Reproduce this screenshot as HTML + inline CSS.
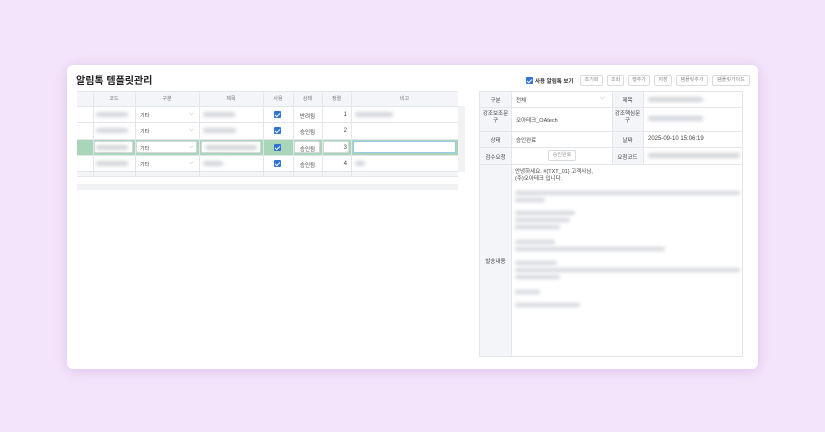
<!DOCTYPE html>
<html><head><meta charset="utf-8"><style>
*{box-sizing:border-box;margin:0;padding:0}
body{width:825px;height:432px;background:#f4e4fb;font-family:"Liberation Sans","Noto Sans CJK KR",sans-serif;position:relative;overflow:hidden;color:#333}
.card{position:absolute;left:67px;top:65px;width:691px;height:304px;background:#fff;border-radius:6px;box-shadow:0 2px 12px rgba(170,120,200,.3)}
.a{position:absolute}
.t{font-size:6px;color:#444;white-space:nowrap}
.bl{position:absolute;height:5px;background:#d3d6dc;filter:blur(1.8px);border-radius:2px}
.hd{background:#f3f5f9}
.ln{position:absolute;background:#e3e6eb}
.cb{position:absolute;width:7px;height:7px;background:#2f73d6;border-radius:1px}
.cb:after{content:"";position:absolute;left:2px;top:0.5px;width:2px;height:4px;border:solid #fff;border-width:0 1px 1px 0;transform:rotate(45deg)}
.btn{position:absolute;top:75px;height:11px;border:1px solid #d8dbe0;border-radius:2px;font-size:5px;color:#888;text-align:center;line-height:9px;background:#fff}
.inp{position:absolute;background:#fff;border:1px solid #d5d9de;border-radius:2px}
</style></head><body>
<div class="card"></div>
<div class="a" style="left:76px;top:72px;font-size:10px;font-weight:bold;color:#222">알림톡 템플릿관리</div>

<div class="a hd" style="left:77px;top:91px;width:381px;height:15px"></div>
<div class="a" style="left:77px;top:139px;width:381px;height:16px;background:#a9d5b9"></div>
<div class="a" style="left:77px;top:171px;width:381px;height:5px;background:#f4f5f7"></div>
<div class="a" style="left:77px;top:184px;width:381px;height:6px;background:#f1f2f4"></div>
<div class="a" style="left:458px;top:106px;width:7px;height:66px;background:#f1f2f4"></div>
<div class="ln" style="left:77px;top:91px;width:381px;height:1px"></div>
<div class="ln" style="left:77px;top:106px;width:381px;height:1px"></div>
<div class="ln" style="left:77px;top:122px;width:381px;height:1px"></div>
<div class="ln" style="left:77px;top:139px;width:381px;height:1px"></div>
<div class="ln" style="left:77px;top:155px;width:381px;height:1px"></div>
<div class="ln" style="left:77px;top:171px;width:381px;height:1px"></div>
<div class="ln" style="left:77px;top:176px;width:381px;height:1px"></div>
<div class="ln" style="left:93px;top:91px;width:1px;height:85px"></div>
<div class="ln" style="left:135px;top:91px;width:1px;height:85px"></div>
<div class="ln" style="left:199px;top:91px;width:1px;height:85px"></div>
<div class="ln" style="left:263px;top:91px;width:1px;height:85px"></div>
<div class="ln" style="left:293px;top:91px;width:1px;height:85px"></div>
<div class="ln" style="left:322px;top:91px;width:1px;height:85px"></div>
<div class="ln" style="left:351px;top:91px;width:1px;height:85px"></div>
<div class="a t" style="left:93px;width:42px;top:95px;text-align:center;font-size:5px;color:#777">코드</div>
<div class="a t" style="left:135px;width:64px;top:95px;text-align:center;font-size:5px;color:#777">구분</div>
<div class="a t" style="left:199px;width:64px;top:95px;text-align:center;font-size:5px;color:#777">제목</div>
<div class="a t" style="left:263px;width:30px;top:95px;text-align:center;font-size:5px;color:#777">사용</div>
<div class="a t" style="left:293px;width:29px;top:95px;text-align:center;font-size:5px;color:#777">상태</div>
<div class="a t" style="left:322px;width:29px;top:95px;text-align:center;font-size:5px;color:#777">정렬</div>
<div class="a t" style="left:351px;width:107px;top:95px;text-align:center;font-size:5px;color:#777">비고</div>

<div class="inp" style="left:94px;top:141px;width:39px;height:12px"></div>
<div class="inp" style="left:136px;top:141px;width:61px;height:12px"></div>
<div class="inp" style="left:201px;top:141px;width:60px;height:12px"></div>
<div class="inp" style="left:294px;top:141px;width:26px;height:12px"></div>
<div class="inp" style="left:323px;top:141px;width:26px;height:12px"></div>
<div class="inp" style="left:353px;top:141px;width:103px;height:12px;border-color:#9fc8e6"></div>

<div class="bl" style="left:96px;top:112px;width:32px"></div>
<div class="bl" style="left:96px;top:128px;width:32px"></div>
<div class="bl" style="left:96px;top:145px;width:32px"></div>
<div class="bl" style="left:96px;top:161px;width:32px"></div>
<div class="bl" style="left:203px;top:112px;width:32px"></div>
<div class="bl" style="left:203px;top:128px;width:33px"></div>
<div class="bl" style="left:205px;top:145px;width:52px"></div>
<div class="bl" style="left:203px;top:161px;width:20px"></div>
<div class="bl" style="left:355px;top:112px;width:38px"></div>
<div class="bl" style="left:355px;top:161px;width:10px"></div>

<div class="a t" style="left:140px;top:112px;font-size:5px">기타</div><div class="a t" style="left:189px;top:111px;font-size:6px;color:#aaa">⌵</div>
<div class="a t" style="left:140px;top:128px;font-size:5px">기타</div><div class="a t" style="left:189px;top:127px;font-size:6px;color:#aaa">⌵</div>
<div class="a t" style="left:140px;top:145px;font-size:5px">기타</div><div class="a t" style="left:189px;top:144px;font-size:6px;color:#aaa">⌵</div>
<div class="a t" style="left:140px;top:161px;font-size:5px">기타</div><div class="a t" style="left:189px;top:160px;font-size:6px;color:#aaa">⌵</div>

<div class="cb" style="left:274px;top:111px"></div>
<div class="cb" style="left:274px;top:127px"></div>
<div class="cb" style="left:274px;top:144px"></div>
<div class="cb" style="left:274px;top:160px"></div>

<div class="a t" style="left:293px;width:29px;text-align:center;top:112px;font-size:5.5px">반려됨</div>
<div class="a t" style="left:293px;width:29px;text-align:center;top:128px;font-size:5.5px">승인됨</div>
<div class="a t" style="left:293px;width:29px;text-align:center;top:145px;font-size:5.5px">승인됨</div>
<div class="a t" style="left:293px;width:29px;text-align:center;top:161px;font-size:5.5px">승인됨</div>
<div class="a t" style="left:322px;width:25px;text-align:right;top:112px">1</div>
<div class="a t" style="left:322px;width:25px;text-align:right;top:128px">2</div>
<div class="a t" style="left:322px;width:25px;text-align:right;top:145px">3</div>
<div class="a t" style="left:322px;width:25px;text-align:right;top:161px">4</div>

<div class="cb" style="left:526px;top:77px"></div>
<div class="a t" style="left:535px;top:77px;font-size:5.5px;font-weight:bold;color:#333">사용 알림톡 보기</div>
<div class="btn" style="left:580px;width:23px">초기화</div>
<div class="btn" style="left:607px;width:17px">조회</div>
<div class="btn" style="left:628px;width:22px">행추가</div>
<div class="btn" style="left:654px;width:18px">저장</div>
<div class="btn" style="left:676px;width:32px">템플릿추가</div>
<div class="btn" style="left:712px;width:38px">템플릿가이드</div>

<div class="a" style="left:479px;top:91px;width:264px;height:266px;border:1px solid #e3e6eb"></div>
<div class="a hd" style="left:480px;top:92px;width:31px;height:264px"></div>
<div class="a hd" style="left:612px;top:92px;width:31px;height:72px"></div>
<div class="ln" style="left:479px;top:107px;width:264px;height:1px"></div>
<div class="ln" style="left:479px;top:131px;width:264px;height:1px"></div>
<div class="ln" style="left:479px;top:147px;width:264px;height:1px"></div>
<div class="ln" style="left:479px;top:164px;width:264px;height:1px"></div>
<div class="ln" style="left:511px;top:91px;width:1px;height:266px"></div>
<div class="ln" style="left:612px;top:91px;width:1px;height:73px"></div>
<div class="ln" style="left:643px;top:91px;width:1px;height:73px"></div>

<div class="a t" style="left:480px;width:31px;text-align:center;top:96px;font-size:5.5px">구분</div>
<div class="a t" style="left:480px;width:31px;text-align:center;top:111px;font-size:5.5px;line-height:7px;white-space:normal">강조보조문<br>구</div>
<div class="a t" style="left:480px;width:31px;text-align:center;top:136px;font-size:5.5px">상태</div>
<div class="a t" style="left:480px;width:31px;text-align:center;top:153px;font-size:5.5px">검수요청</div>
<div class="a t" style="left:480px;width:31px;text-align:center;top:257px;font-size:5.5px">발송내용</div>
<div class="a t" style="left:612px;width:31px;text-align:center;top:96px;font-size:5.5px">제목</div>
<div class="a t" style="left:612px;width:31px;text-align:center;top:111px;font-size:5.5px;line-height:7px">강조핵심문<br>구</div>
<div class="a t" style="left:612px;width:31px;text-align:center;top:136px;font-size:5.5px">날짜</div>
<div class="a t" style="left:612px;width:31px;text-align:center;top:153px;font-size:5.5px">요청코드</div>

<div class="a t" style="left:516px;top:96px;font-size:5.5px">전체</div><div class="a t" style="left:600px;top:95px;color:#aaa">⌵</div>
<div class="a t" style="left:516px;top:116px;font-size:5.5px">오아테크_OAtech</div>
<div class="a t" style="left:516px;top:136px;font-size:5.5px">승인완료</div>
<div class="a" style="left:548px;top:150px;width:28px;height:11px;border:1px solid #d8dbe0;border-radius:2px;font-size:5px;color:#999;text-align:center;line-height:9px">승인완료</div>
<div class="a t" style="left:648px;top:136px;font-size:6px">2025-09-10 15:06:19</div>
<div class="bl" style="left:648px;top:97px;width:55px"></div>
<div class="bl" style="left:648px;top:116px;width:55px"></div>
<div class="bl" style="left:648px;top:153px;width:92px"></div>

<div class="a t" style="left:515px;top:169px;font-size:5.5px;line-height:7px">안녕하세요. #{TXT_01} 고객사님,<br>(주)오아테크 입니다.</div>
<div class="bl" style="left:515px;top:191px;width:225px;height:4px"></div>
<div class="bl" style="left:515px;top:198px;width:30px;height:4px"></div>
<div class="bl" style="left:515px;top:211px;width:60px;height:4px"></div>
<div class="bl" style="left:515px;top:218px;width:55px;height:4px"></div>
<div class="bl" style="left:515px;top:225px;width:45px;height:4px"></div>
<div class="bl" style="left:515px;top:240px;width:40px;height:4px"></div>
<div class="bl" style="left:515px;top:247px;width:150px;height:4px"></div>
<div class="bl" style="left:515px;top:261px;width:42px;height:4px"></div>
<div class="bl" style="left:515px;top:268px;width:225px;height:4px"></div>
<div class="bl" style="left:515px;top:275px;width:45px;height:4px"></div>
<div class="bl" style="left:515px;top:290px;width:25px;height:4px"></div>
<div class="bl" style="left:515px;top:303px;width:65px;height:4px"></div>
</body></html>
